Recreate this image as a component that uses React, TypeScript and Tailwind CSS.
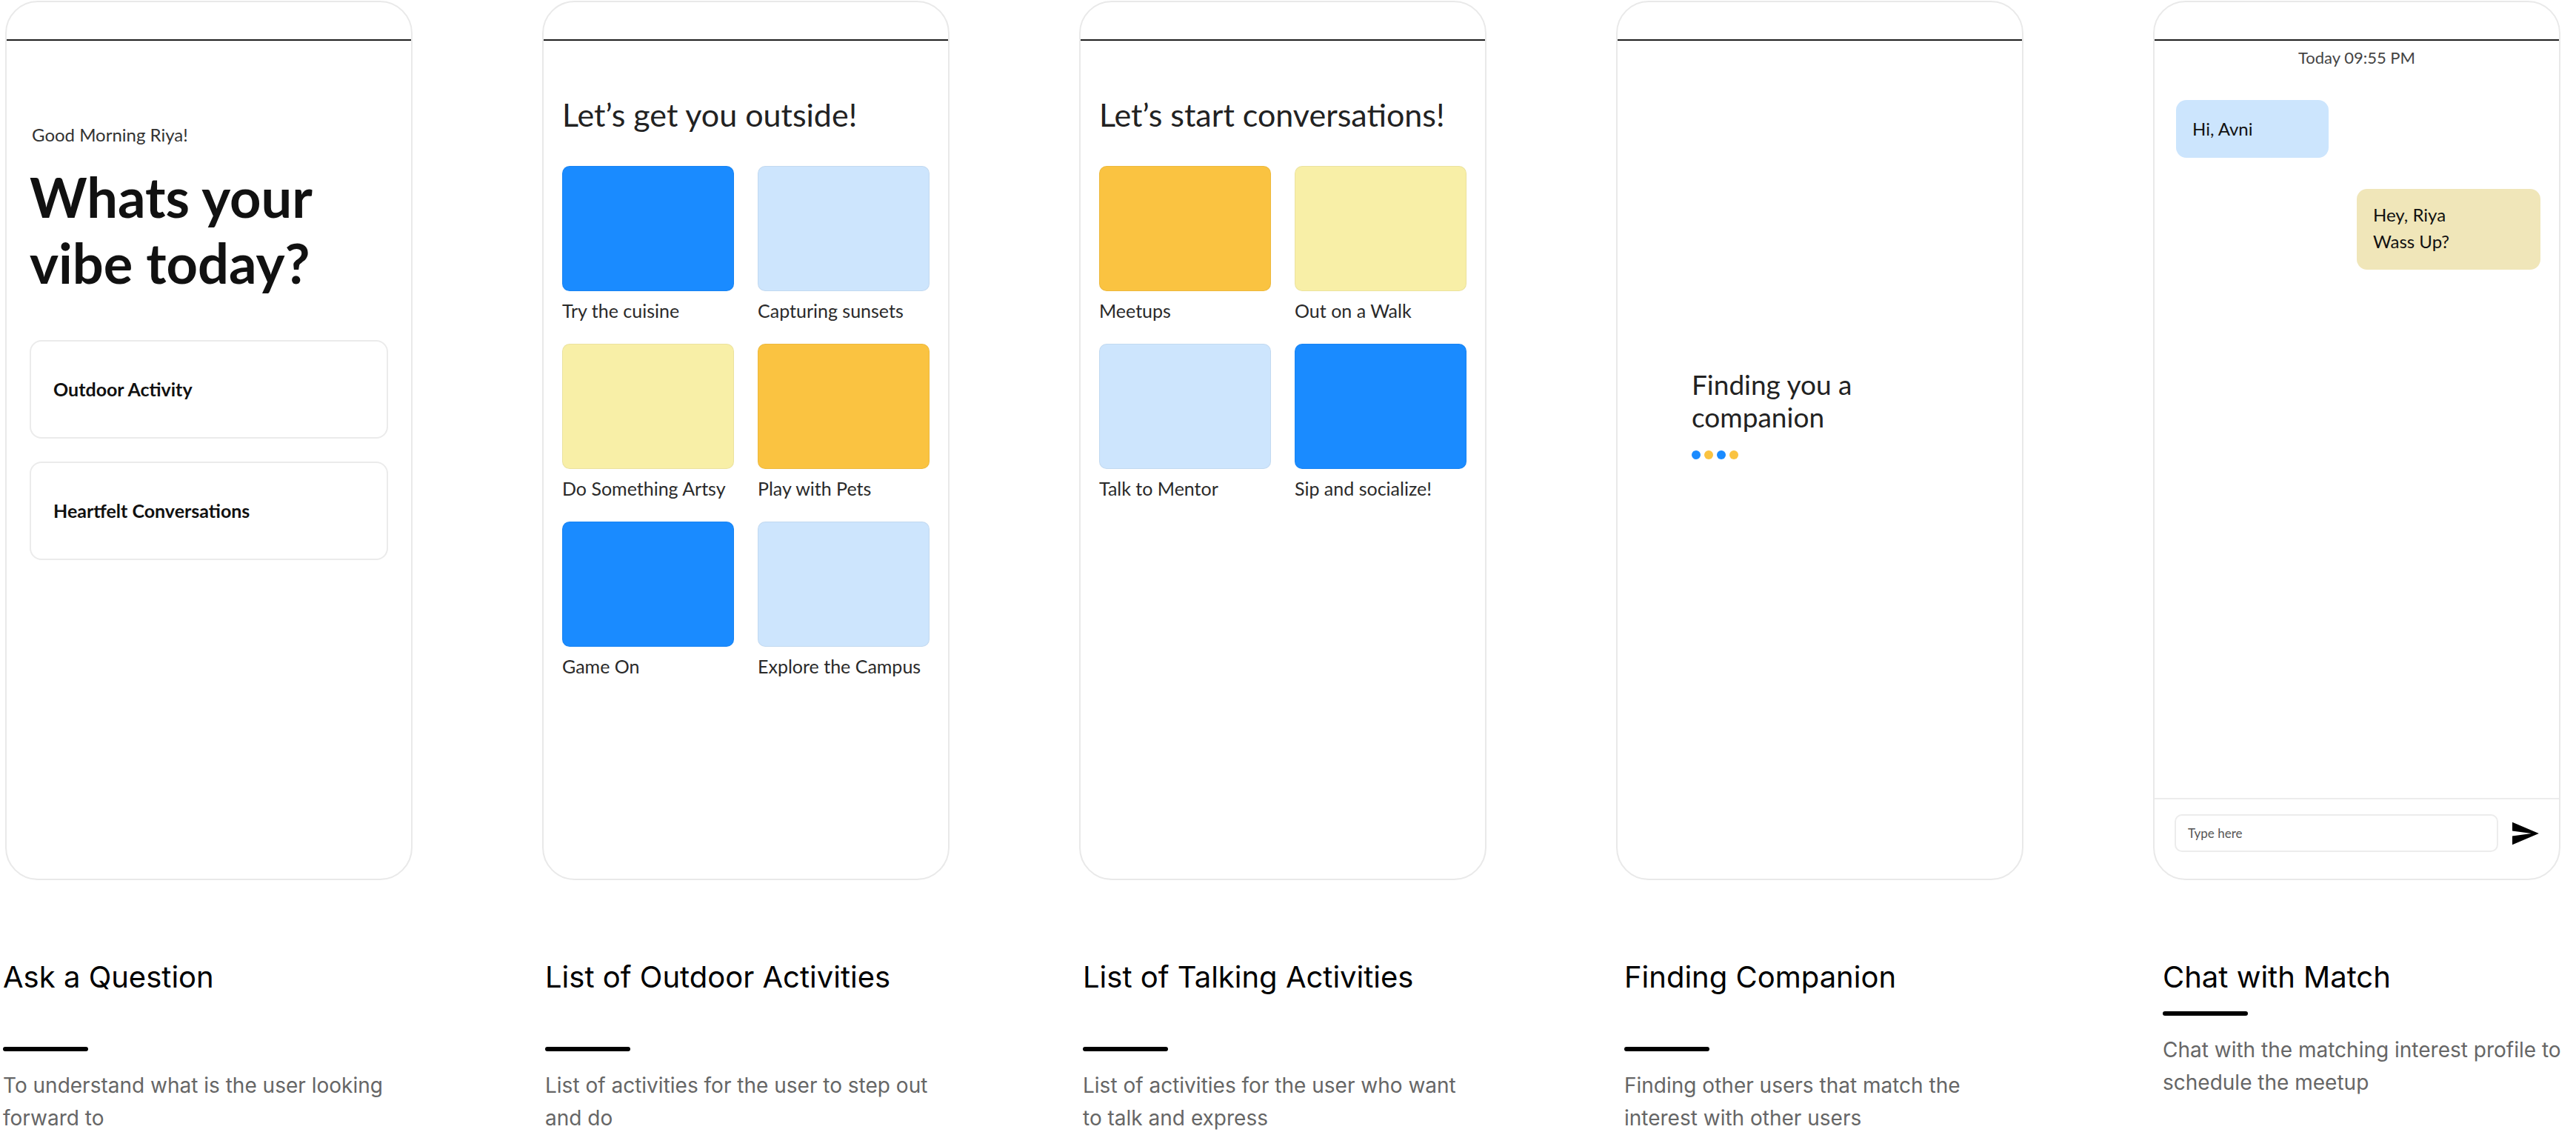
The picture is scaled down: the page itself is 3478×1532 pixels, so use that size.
import type { ReactNode } from "react"

// tile colours used across the activity screens
const tileColors = {
  blue: "bg-[#1a8bff]",
  sky: "bg-[#cde5fd]",
  cream: "bg-[#f8efa7]",
  amber: "bg-[#fac341]",
}

type Tile = { label: string; color: keyof typeof tileColors }

const outdoorTiles: Tile[] = [
  { label: "Try the cuisine", color: "blue" },
  { label: "Capturing sunsets", color: "sky" },
  { label: "Do Something Artsy", color: "cream" },
  { label: "Play with Pets", color: "amber" },
  { label: "Game On", color: "blue" },
  { label: "Explore the Campus", color: "sky" },
]

const talkingTiles: Tile[] = [
  { label: "Meetups", color: "amber" },
  { label: "Out on a Walk", color: "cream" },
  { label: "Talk to Mentor", color: "sky" },
  { label: "Sip and socialize!", color: "blue" },
]

function Phone({ children }: { children: ReactNode }) {
  return (
    <div className="flex h-[1187px] w-[550px] flex-col overflow-hidden rounded-[44px] border-2 border-[#e9e9e9] bg-white font-['Lato',sans-serif]">
      <div className="h-[52px] shrink-0 border-b-2 border-[#1f1f1f]" />
      {children}
    </div>
  )
}

function TileGrid({ title, tiles }: { title: string; tiles: Tile[] }) {
  return (
    <div className="flex flex-col px-[25px]">
      <h2 className="mt-[75px] text-[43px] leading-[50px] text-[#222]">{title}</h2>
      <div className="mt-[44px] grid grid-cols-2 gap-x-[32px] gap-y-[30px]">
        {tiles.map((tile) => (
          <div key={tile.label} className="flex flex-col">
            <div className={`h-[169px] rounded-[10px] border border-black/5 ${tileColors[tile.color]}`} />
            <span className="mt-[11px] text-[25px] leading-[30px] text-[#2a2a2a]">{tile.label}</span>
          </div>
        ))}
      </div>
    </div>
  )
}

function Caption({
  title,
  lines,
  className,
  tight,
}: {
  title: string
  lines: string[]
  className: string
  tight?: boolean
}) {
  return (
    <div className={`flex flex-col font-['Inter',sans-serif] ${className}`}>
      <h3 className="text-[40px] leading-[48px] text-black">{title}</h3>
      <div className={`h-[6px] w-[115px] rounded-full bg-black ${tight ? "mt-[22px]" : "mt-[70px]"}`} />
      <p className="mt-[24px] text-[28px] leading-[44px] whitespace-nowrap text-[#666]">
        {lines[0]}
        <br />
        {lines[1]}
      </p>
    </div>
  )
}

export default function App() {
  return (
    <div className="flex min-h-screen gap-[175px] overflow-hidden bg-white pt-[1px] pl-[7px]">
      {/* Ask a question */}
      <div className="flex w-[550px] shrink-0 flex-col">
        <Phone>
          <div className="flex flex-col px-[31px]">
            <p className="mt-[113px] pl-[3px] text-[24px] leading-[28px] text-[#333]">Good Morning Riya!</p>
            <h1 className="mt-[25px] text-[74px] leading-[89px] font-bold text-[#111]">
              Whats your
              <br />
              vibe today?
            </h1>
            <div className="mt-[60px] flex flex-col gap-[31px]">
              {["Outdoor Activity", "Heartfelt Conversations"].map((option) => (
                <div
                  key={option}
                  className="flex h-[133px] items-center rounded-[16px] border-2 border-[#ebebeb] pl-[30px] text-[25px] font-bold text-[#111]"
                >
                  {option}
                </div>
              ))}
            </div>
          </div>
        </Phone>
        <Caption
          className="mt-[107px] -ml-[3px]"
          title="Ask a Question"
          lines={["To understand what is the user looking", "forward to"]}
        />
      </div>

      {/* Outdoor activities */}
      <div className="flex w-[550px] shrink-0 flex-col">
        <Phone>
          <TileGrid title="Let’s get you outside!" tiles={outdoorTiles} />
        </Phone>
        <Caption
          className="mt-[107px] ml-[4px]"
          title="List of Outdoor Activities"
          lines={["List of activities for the user to step out", "and do"]}
        />
      </div>

      {/* Talking activities */}
      <div className="flex w-[550px] shrink-0 flex-col">
        <Phone>
          <TileGrid title="Let’s start conversations!" tiles={talkingTiles} />
        </Phone>
        <Caption
          className="mt-[107px] ml-[5px]"
          title="List of Talking Activities"
          lines={["List of activities for the user who want", "to talk and express"]}
        />
      </div>

      {/* Finding companion */}
      <div className="flex w-[550px] shrink-0 flex-col">
        <Phone>
          <div className="flex flex-col pl-[100px]">
            <p className="mt-[442px] text-[37px] leading-[44px] text-[#222]">
              Finding you a
              <br />
              companion
            </p>
            <div className="mt-[23px] flex gap-[5px]">
              <span className="h-[12px] w-[12px] rounded-full bg-[#1a8bff]" />
              <span className="h-[12px] w-[12px] rounded-full bg-[#fac341]" />
              <span className="h-[12px] w-[12px] rounded-full bg-[#1a8bff]" />
              <span className="h-[12px] w-[12px] rounded-full bg-[#fac341]" />
            </div>
          </div>
        </Phone>
        <Caption
          className="mt-[107px] ml-[11px]"
          title="Finding Companion"
          lines={["Finding other users that match the", "interest with other users"]}
        />
      </div>

      {/* Chat */}
      <div className="flex w-[550px] shrink-0 flex-col">
        <Phone>
          <p className="mt-[11px] text-center text-[22px] leading-[24px] text-[#444]">Today 09:55 PM</p>
          <div className="flex flex-1 flex-col pr-[25px] pl-[29px]">
            <div className="mt-[45px] flex h-[78px] w-[206px] items-center rounded-[14px] bg-[#cce5fd] pl-[22px] text-[24px] text-[#111]">
              Hi, Avni
            </div>
            <div className="mt-[42px] h-[109px] w-[248px] self-end rounded-[14px] bg-[#f0e6b9] pt-[17px] pl-[22px] text-[24px] leading-[36px] text-[#111]">
              Hey, Riya
              <br />
              Wass Up?
            </div>
          </div>
          <div className="flex items-center border-t-2 border-[#ececec] px-[27px] pt-[20px] pb-[36px]">
            <div className="flex h-[51px] w-[439px] items-center rounded-[10px] border-2 border-[#ececec] pl-[16px] text-[17px] text-[#555]">
              Type here
            </div>
            <svg className="ml-[19px] h-[32px] w-[36px]" viewBox="2 3 21 18" fill="#000">
              <path d="M2.01 21 23 12 2.01 3 2 10l15 2-15 2z" />
            </svg>
          </div>
        </Phone>
        <Caption
          tight
          className="mt-[107px] ml-[13px]"
          title="Chat with Match"
          lines={["Chat with the matching interest profile to", "schedule the meetup"]}
        />
      </div>
    </div>
  )
}
